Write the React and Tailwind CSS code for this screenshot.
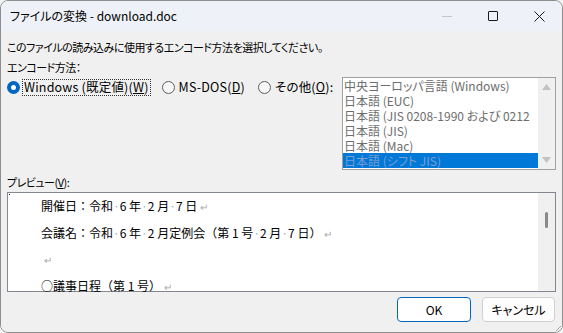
import React from 'react';

const jp = { fontFamily: '"Noto Sans CJK JP", "Noto Sans", sans-serif' };

const Dot = () => <span className="text-[#9db0cf]">·</span>;
const Ret = () => <span className="text-[#a8a8a8] text-[10px] ml-[3px]">↵</span>;

const Radio = ({ checked }) =>
  checked ? (
    <span className="block w-[13px] h-[13px] rounded-full bg-[#0067c0] flex items-center justify-center shrink-0">
      <span className="block w-[5px] h-[5px] rounded-full bg-white" />
    </span>
  ) : (
    <span className="block w-[13px] h-[13px] rounded-full border border-[#5c5c5c] bg-[#f7f7f7] shrink-0" />
  );

const items = [
  '中央ヨーロッパ言語 (Windows)',
  '日本語 (EUC)',
  '日本語 (JIS 0208-1990 および 0212',
  '日本語 (JIS)',
  '日本語 (Mac)',
  '日本語 (シフト JIS)',
];

export default function App() {
  return (
    <div className="w-[563px] h-[333px] bg-[#f3f3f3] text-black" style={jp}>
      <div className="h-full flex flex-col border border-[#8e8e8e] rounded-[8px] overflow-hidden [font-feature-settings:'palt']">
        {/* title bar */}
        <div className="h-[30px] shrink-0 bg-[#eef2f8] flex items-center pl-[9px] text-[12px]">
          <span>ファイルの変換 - download.doc</span>
          <div className="ml-auto flex items-center h-full">
            <div className="w-[46px] h-full flex items-center justify-center">
              <span className="block w-[10px] h-px bg-[#c4c4c4]" />
            </div>
            <div className="w-[46px] h-full flex items-center justify-center">
              <span className="block w-[10px] h-[10px] border border-[#1a1a1a] rounded-[1px]" />
            </div>
            <div className="w-[46px] h-full flex items-center justify-center">
              <svg width="11" height="11" viewBox="0 0 11 11">
                <path d="M0.5 0.5L10.5 10.5M10.5 0.5L0.5 10.5" stroke="#1a1a1a" strokeWidth="1" />
              </svg>
            </div>
          </div>
        </div>

        {/* body */}
        <div className="flex-1 bg-[#f0f0f0] pl-[6px] pr-[6px] pt-[6px] flex flex-col text-[12px] relative">
          <div className="h-[20px] flex items-center text-[11px] tracking-[-0.5px]">
            このファイルの読み込みに使用するエンコード方法を選択してください。
          </div>
          <div className="h-[20px] flex items-center text-[11px] tracking-[-0.5px]">エンコード方法：</div>

          <div className="flex items-start">
            <div className="h-[20px] flex items-center text-[12.5px] tracking-[0.2px]">
              <Radio checked />
              <span className="ml-[2px] px-[1px] h-[17px] flex items-center border border-dotted border-[#333]">
                Windows (既定値)(<u>W</u>)
              </span>
              <span className="ml-[11px] flex items-center"><Radio /></span>
              <span className="ml-[4px]">MS-DOS(<u>D</u>)</span>
              <span className="ml-[13px] flex items-center"><Radio /></span>
              <span className="ml-[4px]">その他(<u>O</u>):</span>
            </div>

            <div className="ml-auto w-[214px] h-[93px] border border-[#a0a0a0] bg-white flex">
              <div className="flex-1 flex flex-col text-[#6d6d6d] overflow-hidden">
                {items.map((t, i) => (
                  <div
                    key={i}
                    className={`h-[15px] leading-[15px] pl-[1px] whitespace-nowrap ${
                      i === 5 ? 'bg-[#0078d7] text-[#7d9ed1]' : ''
                    }`}
                  >
                    {t}
                  </div>
                ))}
              </div>
              <div className="w-[17px] bg-[#f0f0f0] flex flex-col items-center justify-between py-[6px]">
                <svg width="9" height="6" viewBox="0 0 9 6"><path d="M4.5 0L9 6H0z" fill="#c2c2c2" /></svg>
                <svg width="9" height="6" viewBox="0 0 9 6"><path d="M0 0h9L4.5 6z" fill="#c2c2c2" /></svg>
              </div>
            </div>
          </div>

          <div className="h-[20px] mt-[2px] flex items-center text-[11px] tracking-[-0.5px]">
            プレビュー(<u>V</u>):
          </div>

          <div className="h-[100px] border border-[#828790] bg-white flex">
            <div className="flex-1 pl-[33px] text-[12px] leading-[25.5px] relative [font-feature-settings:normal]">
              <span className="absolute left-[1px] top-[1px] w-px h-px bg-black" />
              <div>開催日：令和<Dot />6 年<Dot />2 月<Dot />7 日<Ret /></div>
              <div>会議名：令和<Dot />6 年<Dot />2 月定例会（第 1 号<Dot />2 月<Dot />7 日）<Ret /></div>
              <div><Ret /></div>
              <div>○議事日程（第 1 号）<Ret /></div>
            </div>
            <div className="w-[17px] bg-[#f0f0f0] flex justify-center pt-[19px]">
              <span className="block w-[3px] h-[16px] rounded-full bg-[#8a8a8a]" />
            </div>
          </div>

          <div className="flex justify-end gap-[11px] mt-[5px] pr-px">
            <button className="w-[74px] h-[25px] rounded-[4px] border border-[#0067c0] bg-white text-[12px] flex items-center justify-center">
              OK
            </button>
            <button className="w-[73px] h-[25px] rounded-[4px] border border-[#d0d0d0] bg-[#fdfdfd] text-[12px] flex items-center justify-center">
              キャンセル
            </button>
          </div>

          <svg className="absolute right-0 bottom-0" width="8" height="8" viewBox="0 0 8 8">
            <path d="M7 2L2 7M7 5L5 7" stroke="#a6a6a6" strokeWidth="1" />
          </svg>
        </div>
      </div>
    </div>
  );
}
